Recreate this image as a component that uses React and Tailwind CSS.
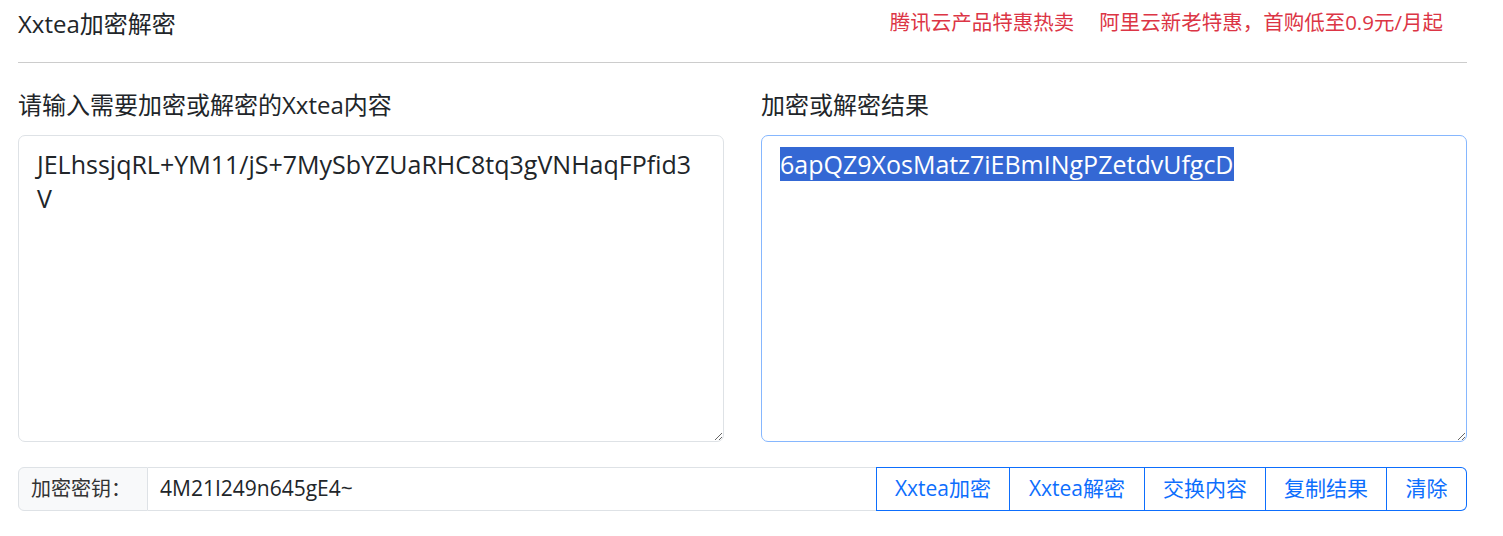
import React from "react";

const font = { fontFamily: '"Open Sans", "Noto Sans CJK SC", sans-serif' };

export default function App() {
  return (
    <div className="bg-white w-[1503px] h-[536px] overflow-hidden text-[#212529]" style={font}>
      <div className="ml-[18px] w-[1449px]">
        <div className="flex items-center justify-between h-[48px]">
          <div className="text-[24px] leading-none">Xxtea加密解密</div>
          <div className="flex gap-[25px] pr-[24px] text-[20.5px] text-[#dc3545] leading-none -mt-[4px]">
            <span>腾讯云产品特惠热卖</span>
            <span>阿里云新老特惠，首购低至0.9元/月起</span>
          </div>
        </div>
        <div className="mt-[14px] h-px bg-[#cccccc]" />
        <div className="grid grid-cols-2 gap-[37px] mt-[25px]">
          <div className="flex flex-col">
            <label className="text-[24px] leading-[34px] h-[36px]">请输入需要加密或解密的Xxtea内容</label>
            <textarea
              className="mt-[11px] h-[307px] w-full rounded-[7px] border border-[#dee2e6] px-[18px] py-[11px] text-[25px] leading-[34px] outline-none resize-y"
              style={font}
              defaultValue="JELhssjqRL+YM11/jS+7MySbYZUaRHC8tq3gVNHaqFPfid3V"
            />
          </div>
          <div className="flex flex-col">
            <label className="text-[24px] leading-[34px] h-[36px]">加密或解密结果</label>
            <div className="mt-[11px] h-[307px] w-full rounded-[7px] border border-[#86b7fe] px-[18px] py-[11px] text-[25px] leading-[34px] overflow-auto resize-y">
              <span className="bg-[#3468d4] text-white">6apQZ9XosMatz7iEBmINgPZetdvUfgcD</span>
            </div>
          </div>
        </div>
        <div className="flex mt-[25px] h-[44px] text-[21px]">
          <div className="flex shrink-0 items-center w-[130px] pl-[12px] whitespace-nowrap bg-[#f8f9fa] border border-[#dee2e6] rounded-l-[6px] text-[20px] text-[#333]">加密密钥：</div>
          <div className="flex items-center flex-1 px-[12px] border-y border-[#dee2e6]">4M21I249n645gE4~</div>
          <button className="shrink-0 w-[134px] border border-[#0d6efd] text-[#0d6efd]">Xxtea加密</button>
          <button className="shrink-0 w-[135px] border border-l-0 border-[#0d6efd] text-[#0d6efd]">Xxtea解密</button>
          <button className="shrink-0 w-[121px] border border-l-0 border-[#0d6efd] text-[#0d6efd]">交换内容</button>
          <button className="shrink-0 w-[121px] border border-l-0 border-[#0d6efd] text-[#0d6efd]">复制结果</button>
          <button className="shrink-0 w-[80px] border border-l-0 border-[#0d6efd] text-[#0d6efd] rounded-r-[6px]">清除</button>
        </div>
      </div>
    </div>
  );
}
